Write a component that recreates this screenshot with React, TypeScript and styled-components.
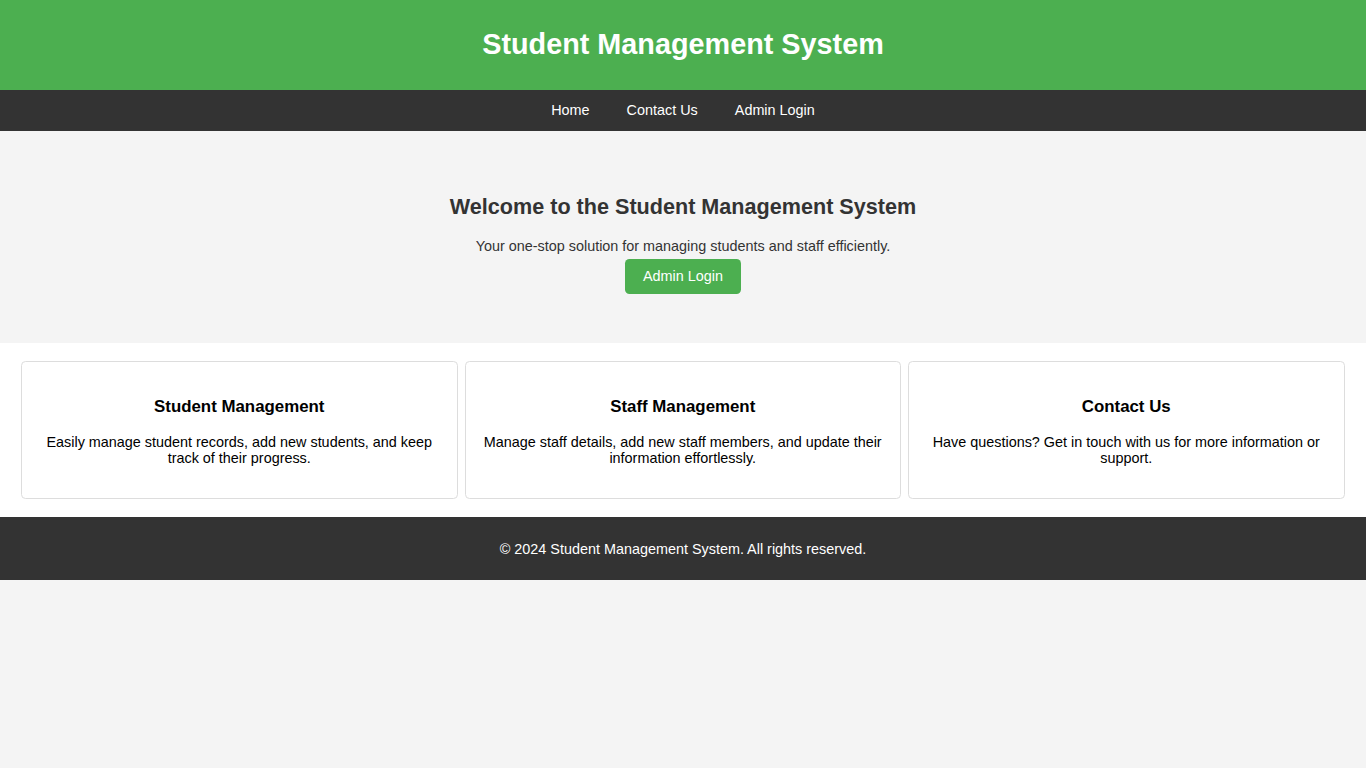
import React from "react";
import styled, { createGlobalStyle } from "styled-components";

const GlobalStyle = createGlobalStyle`
  html, body {
    margin: 0;
    padding: 0;
    background: #f4f4f4;
    font-family: "Liberation Sans", Arial, sans-serif;
    font-size: 14.4px;
    color: #333;
  }
  * { box-sizing: border-box; }
`;

const Header = styled.header`
  background: #4caf50;
  color: #fff;
  text-align: center;
  padding: 9px 0;
`;

const Title = styled.h1`
  margin: 19.3px 0;
  font-size: 28.8px;
  font-weight: bold;
  line-height: 33px;
`;

const Nav = styled.nav`
  background: #333;
  height: 41px;
  display: flex;
  align-items: center;
  justify-content: center;
  gap: 37px;
`;

const NavLink = styled.a`
  color: #fff;
  text-decoration: none;
  font-size: 14.4px;
  line-height: 16.5px;
  cursor: pointer;
`;

const Hero = styled.section`
  background: #f4f4f4;
  text-align: center;
  padding: 45px 18px 49.5px;
  color: #333;
`;

const HeroTitle = styled.h2`
  margin: 18.9px 0 18.9px;
  font-size: 21.6px;
  line-height: 25px;
  font-weight: bold;
`;

const HeroText = styled.p`
  margin: 0;
  font-size: 14.4px;
  line-height: 16.5px;
`;

const Button = styled.a`
  display: inline-block;
  margin-top: 4.2px;
  background: #4caf50;
  color: #fff;
  text-decoration: none;
  padding: 9px 18px;
  border-radius: 4.5px;
  font-size: 14.4px;
  line-height: 16.5px;
  cursor: pointer;
`;

const Features = styled.section`
  background: #fff;
  display: grid;
  grid-template-columns: repeat(3, 1fr);
  gap: 7px;
  padding: 18.3px 21.5px 18px 21px;
`;

const Card = styled.div`
  background: #fff;
  border: 1px solid #ddd;
  border-radius: 4.5px;
  padding: 17px 18px 17px;
  text-align: center;
  color: #000;
`;

const CardTitle = styled.h3`
  margin: 17.85px 0 17.85px;
  font-size: 16.85px;
  line-height: 19.4px;
  font-weight: bold;
`;

const CardText = styled.p`
  margin: 14.4px 0;
  font-size: 14.4px;
  line-height: 16px;
`;

const Footer = styled.footer`
  background: #333;
  color: #fff;
  text-align: center;
  padding: 10px 0 8px;
`;

const FooterText = styled.p`
  margin: 14.4px 0;
  font-size: 14.4px;
  line-height: 16.5px;
`;

const features = [
  {
    title: "Student Management",
    text: "Easily manage student records, add new students, and keep track of their progress.",
  },
  {
    title: "Staff Management",
    text: "Manage staff details, add new staff members, and update their information effortlessly.",
  },
  {
    title: "Contact Us",
    text: "Have questions? Get in touch with us for more information or support.",
  },
];

export default function App() {
  return (
    <>
      <GlobalStyle />
      <Header>
        <Title>Student Management System</Title>
      </Header>
      <Nav>
        <NavLink>Home</NavLink>
        <NavLink>Contact Us</NavLink>
        <NavLink>Admin Login</NavLink>
      </Nav>
      <Hero>
        <HeroTitle>Welcome to the Student Management System</HeroTitle>
        <HeroText>Your one-stop solution for managing students and staff efficiently.</HeroText>
        <Button>Admin Login</Button>
      </Hero>
      <Features>
        {features.map((f) => (
          <Card key={f.title}>
            <CardTitle>{f.title}</CardTitle>
            <CardText>{f.text}</CardText>
          </Card>
        ))}
      </Features>
      <Footer>
        <FooterText>© 2024 Student Management System. All rights reserved.</FooterText>
      </Footer>
    </>
  );
}
